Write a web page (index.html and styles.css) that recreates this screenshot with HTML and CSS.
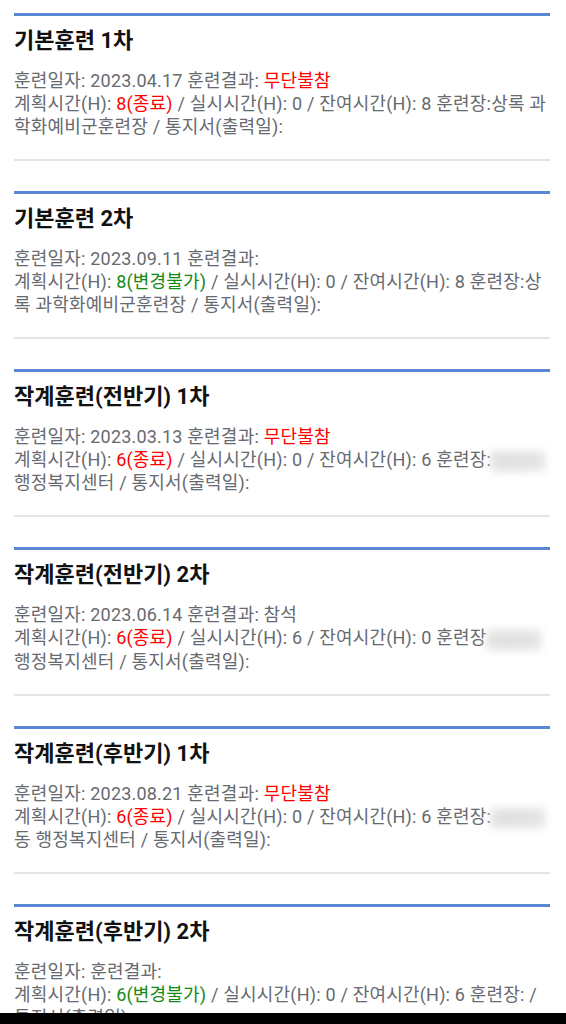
FILE: index.html
```html
<!DOCTYPE html>
<html lang="ko">
<head>
    <meta charset="UTF-8">
    <title>예비군 훈련 내역</title>
    <link rel="stylesheet" href="styles.css">
</head>
<body>
<div class="list">
    <div class="item">
        <h3 class="title">기본훈련 1차</h3>
        <p class="info">훈련일자: 2023.04.17 훈련결과: <span class="red">무단불참</span><br>계획시간(H): <span class="red">8(종료)</span> / 실시시간(H): 0 / 잔여시간(H): 8 훈련장:상록 과학화예비군훈련장 / 통지서(출력일):</p>
    </div>
    <div class="item">
        <h3 class="title">기본훈련 2차</h3>
        <p class="info">훈련일자: 2023.09.11 훈련결과: <br>계획시간(H): <span class="green">8(변경불가)</span> / 실시시간(H): 0 / 잔여시간(H): 8 훈련장:상록 과학화예비군훈련장 / 통지서(출력일):</p>
    </div>
    <div class="item">
        <h3 class="title">작계훈련(전반기) 1차</h3>
        <p class="info">훈련일자: 2023.03.13 훈련결과: <span class="red">무단불참</span><br>계획시간(H): <span class="red">6(종료)</span> / 실시시간(H): 0 / 잔여시간(H): 6 훈련장:<span class="blur wide">○○</span> 행정복지센터 / 통지서(출력일):</p>
    </div>
    <div class="item">
        <h3 class="title">작계훈련(전반기) 2차</h3>
        <p class="info">훈련일자: 2023.06.14 훈련결과: 참석<br>계획시간(H): <span class="red">6(종료)</span> / 실시시간(H): 6 / 잔여시간(H): 0 훈련장<span class="blur wide">:○○</span> 행정복지센터 / 통지서(출력일):</p>
    </div>
    <div class="item">
        <h3 class="title">작계훈련(후반기) 1차</h3>
        <p class="info">훈련일자: 2023.08.21 훈련결과: <span class="red">무단불참</span><br>계획시간(H): <span class="red">6(종료)</span> / 실시시간(H): 0 / 잔여시간(H): 6 훈련장:<span class="blur wide">○○</span>동 행정복지센터 / 통지서(출력일):</p>
    </div>
    <div class="item">
        <h3 class="title">작계훈련(후반기) 2차</h3>
        <p class="info">훈련일자: 훈련결과: <br>계획시간(H): <span class="green">6(변경불가)</span> / 실시시간(H): 0 / 잔여시간(H): 6 훈련장: / 통지서(출력일):</p>
    </div>
</div>
<div class="navbar"></div>
</body>
</html>
```

FILE: styles.css
```css
*{
    margin: 0;
    padding: 0;
}
body{
    background: #fff;
    font-family: Roboto, "Noto Sans CJK KR", sans-serif;
}
.list{
    padding: 13px 16px 0 14px;
}
.item{
    border-top: 3px solid #5b86d6;
    border-bottom: 2px solid #e1e4e9;
    padding: 10px 0 21px;
    margin-bottom: 30px;
}
.title{
    font-size: 22px;
    line-height: 30px;
    font-weight: bold;
    color: #111;
}
.info{
    margin-top: 13px;
    font-size: 18px;
    line-height: 23px;
    letter-spacing: 0.2px;
    color: #676a70;
}
.red{
    color: #f00;
}
.green{
    color: #138a13;
}
.blur{
    display: inline-block;
    width: 40px;
    height: 20px;
    vertical-align: middle;
    background: #e4e4e4;
    color: #ccc;
    filter: blur(4px);
}
.blur.wide{
    width: 54px;
}
.navbar{
    position: fixed;
    left: 0;
    right: 0;
    bottom: 0;
    height: 11px;
    background: #000;
}
```
